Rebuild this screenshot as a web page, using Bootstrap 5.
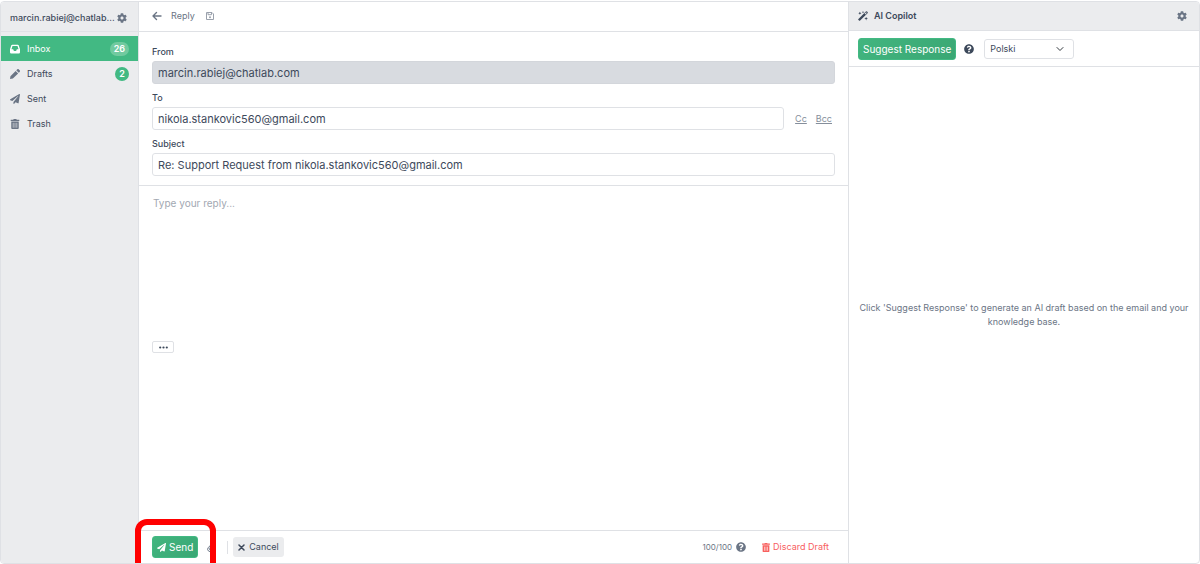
<!DOCTYPE html>
<html lang="en">
<head>
<meta charset="utf-8">
<meta name="viewport" content="width=device-width, initial-scale=1">
<title>Inbox – Reply</title>
<link href="https://cdn.jsdelivr.net/npm/bootstrap@5.3.0/dist/css/bootstrap.min.css" rel="stylesheet">
<style>
  :root { --ink:#3d495b; --muted-ink:#6b7585; --line:#dfe1e5; --panel:#ebecee; --brand:#42b983; }
  body { font-family:Inter,"Liberation Sans",sans-serif; font-size:9px; line-height:14px; color:var(--ink); background:#fff; }
  svg { fill:currentColor; flex:none; display:block; }
  button, input, select, textarea { font-family:inherit; }
  .app-shell { border:1px solid var(--line); border-radius:4px; margin-top:1px; height:calc(100vh - 1px); overflow:hidden; }
  .icon-btn { border:0; background:none; padding:0; color:var(--muted-ink); }

  .side { width:138px; background:var(--panel); border-right:1px solid var(--line); }
  .side-head { height:30px; padding:2px 11px 0 9px; border-bottom:1px solid var(--line); font-weight:500; }
  .side .nav-link { height:25px; padding:0 9px; color:var(--ink); border-radius:0; font-size:9px; }
  .side .nav-link.active { background:var(--brand); color:#fff; }
  .side .nav-link svg { width:10px; height:10px; margin-right:7px; color:var(--muted-ink); }
  .side .nav-link.active svg { color:#fff; }
  .count { background:var(--brand); color:#fff; border-radius:7px; height:14px; min-width:14px; padding:0 4px; font-size:9px; font-weight:600; text-align:center; }
  .active .count { background:#71ca9f; }

  .bar { height:30px; padding:0 13px 1px; border-bottom:1px solid var(--line); }
  .reply-title { margin:0 11px 0 9px; color:var(--muted-ink); }
  .save { color:#9aa1ac; }
  .fields { gap:8px; padding:14px 13px 9px; border-bottom:1px solid var(--line); }
  .fields label { font-size:9px; font-weight:500; line-height:12px; margin-bottom:3px; display:block; }
  .fields .form-control { height:23px; min-height:0; padding:0 5px; font-size:11px; line-height:16px; border-color:var(--line); border-radius:3px; color:var(--ink); }
  .fields .form-control:disabled { background:#d8dbe0; border-color:#d3d6db; }
  .copy-link { font-size:9px; color:#858e9b; }
  .cc { margin-left:11px; }
  .bcc { margin:0 3px 0 9px; }
  .compose { padding:10px 13px; }
  .reply-box { border:0; resize:none; padding:0 1px; height:145px; font-size:10px; line-height:14px; color:var(--ink); }
  .reply-box::placeholder { color:#a2a8b2; opacity:1; }
  .more { width:22px; height:12px; border:1px solid var(--line); border-radius:2px; background:#fff; padding:0; color:var(--ink); }

  .foot { height:33px; border-top:1px solid var(--line); padding:0 19px 0 13px; }
  .btn-brand { background:linear-gradient(135deg,#42b57f,#3aa774); border:1px solid var(--brand); color:#fff; border-radius:3px; font-size:10px; line-height:14px; padding:3px 4px; white-space:nowrap; }
  .btn-brand:hover { background:#379c6d; color:#fff; }
  .btn-cancel { background:var(--panel); border:0; color:var(--ink); border-radius:3px; font-size:9px; line-height:14px; padding:3px 5px; }
  .callout { position:absolute; inset:-17px -18px -20px -17px; border:6px solid #f00; border-radius:12px; pointer-events:none; z-index:2; }
  .send-icon, .bin { margin-right:3px; }
  .x-icon { margin-right:4px; }
  .clip { margin:0 11px 0 9px; }
  .divider { width:1px; height:13px; margin-right:5px; background:var(--line); }
  .quota { color:var(--muted-ink); font-size:8px; }
  .danger-link { color:#f8615f; border:0; background:none; padding:0; }

  .copilot { width:351px; border-left:1px solid var(--line); }
  .copilot-head { height:29px; background:var(--panel); border-bottom:1px solid var(--line); padding:0 12px 0 9px; font-weight:600; }
  .cp-title { margin-left:6px; }
  .tools { height:36px; border-bottom:1px solid var(--line); padding:0 9px; }
  .tool-help { margin:0 10px 0 8px; }
  .lang { width:90px; height:20px; border:1px solid var(--line); border-radius:3px; padding:0 5px; font-size:9px; line-height:14px; color:var(--ink); background-size:8px 8px; background-position:right 9px center; }
  .hint { color:var(--muted-ink); padding:0 8px; }
</style>
</head>
<body>
<svg class="d-none" aria-hidden="true">
  <symbol id="cog" viewBox="0 0 512 512"><path d="M487.4 315.7l-42.6-24.6c4.3-23.2 4.3-47 0-70.2l42.6-24.6c4.9-2.8 7.1-8.6 5.5-14-11.1-35.6-30-67.8-54.7-94.6-3.8-4.1-10-5.1-14.8-2.3L380.8 110c-17.9-15.4-38.5-27.3-60.8-35.1V25.8c0-5.6-3.9-10.5-9.4-11.7-36.7-8.2-74.3-7.8-109.2 0-5.5 1.2-9.4 6.1-9.4 11.7V75c-22.2 7.9-42.8 19.8-60.8 35.1L88.7 85.500c-4.9-2.8-11-1.9-14.8 2.3-24.7 26.7-43.6 58.9-54.7 94.6-1.7 5.4.6 11.2 5.500 14L67.3 221c-4.3 23.2-4.3 47 0 70.2l-42.6 24.6c-4.9 2.8-7.1 8.6-5.500 14 11.1 35.6 30 67.8 54.7 94.6 3.8 4.1 10 5.1 14.8 2.3l42.6-24.6c17.9 15.4 38.5 27.3 60.8 35.1v49.2c0 5.6 3.9 10.5 9.4 11.7 36.7 8.2 74.3 7.8 109.2 0 5.500-1.2 9.4-6.1 9.4-11.7v-49.2c22.2-7.9 42.8-19.8 60.8-35.1l42.6 24.6c4.9 2.8 11 1.9 14.8-2.3 24.7-26.7 43.6-58.9 54.7-94.6 1.5-5.500-.7-11.3-5.600-14.1zM256 336c-44.1 0-80-35.9-80-80s35.9-80 80-80 80 35.9 80 80-35.9 80-80 80z"/></symbol>
  <symbol id="plane" viewBox="0 0 512 512"><path d="M476 3.2L12.5 270.6c-18.1 10.4-15.8 35.6 2.2 43.2L121 358.4l287.3-253.2c5.5-4.9 13.3 2.6 8.6 8.3L176 407v80.5c0 23.6 28.5 32.9 42.5 15.8L282 426l124.6 52.2c14.2 6 30.4-2.9 33-18.2l72-432C515 7.8 493.3-6.8 476 3.2z"/></symbol>
  <symbol id="trash" viewBox="0 0 448 512"><path d="M32 464a48 48 0 0 0 48 48h288a48 48 0 0 0 48-48V128H32zm272-256a16 16 0 0 1 32 0v224a16 16 0 0 1-32 0zm-96 0a16 16 0 0 1 32 0v224a16 16 0 0 1-32 0zm-96 0a16 16 0 0 1 32 0v224a16 16 0 0 1-32 0zM432 32H312l-9.4-18.7A24 24 0 0 0 281.1 0H166.8a23.72 23.72 0 0 0-21.4 13.3L136 32H16A16 16 0 0 0 0 48v32a16 16 0 0 0 16 16h416a16 16 0 0 0 16-16V48a16 16 0 0 0-16-16z"/></symbol>
  <symbol id="help" viewBox="0 0 512 512"><path d="M504 256c0 136.997-111.043 248-248 248S8 392.997 8 256C8 119.083 119.043 8 256 8s248 111.083 248 248zM262.655 90c-54.497 0-89.255 22.957-116.549 63.758-3.536 5.286-2.353 12.415 2.715 16.258l34.699 26.31c5.205 3.947 12.621 3.008 16.665-2.122 17.864-22.658 30.113-35.797 57.303-35.797 20.429 0 45.698 13.148 45.698 32.958 0 14.976-12.363 22.667-32.534 33.976C247.128 238.528 216 254.941 216 296v4c0 6.627 5.373 12 12 12h56c6.627 0 12-5.373 12-12v-1.333c0-28.462 83.186-29.647 83.186-106.667 0-58.002-60.165-102-116.531-102zM256 338c-25.365 0-46 20.635-46 46 0 25.364 20.635 46 46 46s46-20.636 46-46c0-25.365-20.635-46-46-46z"/></symbol>
</svg>

<div class="app-shell d-flex">
  <aside class="side d-flex flex-column flex-shrink-0">
    <div class="side-head d-flex align-items-center">
      <span class="text-nowrap flex-grow-1">marcin.rabiej@chatlab...</span>
      <button class="icon-btn" type="button" aria-label="Account settings"><svg width="10" height="10"><use href="#cog"/></svg></button>
    </div>
    <nav class="nav flex-column pt-1" aria-label="Folders">
      <a class="nav-link active d-flex align-items-center" href="#"><svg viewBox="0 0 16 16"><path fill-rule="evenodd" d="M3.5 1h9a1.5 1.5 0 0 1 1.400 1L16 8.500V13a2 2 0 0 1-2 2H2a2 2 0 0 1-2-2V8.500L2.100 2A1.500 1.500 0 0 1 3.500 1zM4 3 2.300 8.500H5l1.300 2.500h3.400L11 8.500h2.700L12 3z"/></svg><span class="flex-grow-1">Inbox</span><span class="count">26</span></a>
      <a class="nav-link d-flex align-items-center" href="#"><svg viewBox="0 0 16 16"><path d="M9 3 13 7 4.600 15.300 0 16l.7-4.600zM10 2l1.400-1.400a2 2 0 0 1 2.800 0l1.200 1.200a2 2 0 0 1 0 2.800L14 6z"/></svg><span class="flex-grow-1">Drafts</span><span class="count">2</span></a>
      <a class="nav-link d-flex align-items-center" href="#"><svg><use href="#plane"/></svg><span>Sent</span></a>
      <a class="nav-link d-flex align-items-center" href="#"><svg><use href="#trash"/></svg><span>Trash</span></a>
    </nav>
  </aside>

  <main class="d-flex flex-column flex-grow-1">
    <header class="bar d-flex align-items-center">
      <button class="icon-btn" type="button" aria-label="Back"><svg width="10" height="10" viewBox="0 0 10 10"><path d="M4.500 1.500 1 5l3.500 3.500M1 5h8" fill="none" stroke="currentColor" stroke-width="1.400" stroke-linecap="round" stroke-linejoin="round"/></svg></button>
      <span class="reply-title">Reply</span>
      <button class="icon-btn save" type="button" aria-label="Save draft"><svg width="8" height="8" viewBox="0 0 8 8"><path d="M.5.5h5.500l1.500 1.500v5.500h-7zM2 .5v2.200h3.500V.5" fill="none" stroke="currentColor"/><circle cx="4" cy="5.200" r="1"/></svg></button>
    </header>

    <form class="d-flex flex-column flex-grow-1" onsubmit="return false">
      <div class="fields d-flex flex-column">
        <div><label for="from">From</label><input id="from" class="form-control" value="marcin.rabiej@chatlab.com" disabled></div>
        <div><label for="to">To</label>
          <div class="d-flex align-items-center"><input id="to" class="form-control" value="nikola.stankovic560@gmail.com"><a class="copy-link cc" href="#">Cc</a><a class="copy-link bcc" href="#">Bcc</a></div>
        </div>
        <div><label for="subject">Subject</label><input id="subject" class="form-control" value="Re: Support Request from nikola.stankovic560@gmail.com"></div>
      </div>
      <div class="compose flex-grow-1">
        <textarea class="reply-box d-block w-100" placeholder="Type your reply..." aria-label="Reply"></textarea>
        <button class="more d-flex align-items-center justify-content-center" type="button" aria-label="Show quoted text"><svg width="9" height="3" viewBox="0 0 9 3"><circle cx="1.200" cy="1.500" r="1.100"/><circle cx="4.500" cy="1.500" r="1.100"/><circle cx="7.800" cy="1.500" r="1.100"/></svg></button>
      </div>
      <footer class="foot d-flex align-items-center">
        <div class="position-relative">
          <button class="btn btn-brand d-flex align-items-center" type="submit"><svg class="send-icon" width="9" height="9"><use href="#plane"/></svg>Send</button>
          <span class="callout"></span>
        </div>
        <button class="icon-btn clip" type="button" aria-label="Attach file"><svg width="9" height="9" viewBox="0 0 9 9"><path d="M4.500 3 2.500 5.300a.8.8 0 0 0 1.200 1.200l3-3.200A1.500 1.500 0 0 0 4.500 1.200L1.300 4.600a2.300 2.300 0 0 0 3.400 3.200L7 5.500" fill="none" stroke="currentColor"/></svg></button>
        <span class="divider"></span>
        <button class="btn btn-cancel d-flex align-items-center" type="button"><svg class="x-icon" width="7" height="7" viewBox="0 0 7 7"><path d="m1 1 5 5m0-5-5 5" stroke="currentColor" stroke-width="1.500" stroke-linecap="round"/></svg>Cancel</button>
        <span class="ms-auto quota">100/100</span>
        <svg class="quota ms-1" width="10" height="10"><use href="#help"/></svg>
        <button class="danger-link d-flex align-items-center ms-3" type="button"><svg class="bin" width="8" height="9"><use href="#trash"/></svg>Discard Draft</button>
      </footer>
    </form>
  </main>

  <aside class="copilot d-flex flex-column flex-shrink-0">
    <header class="copilot-head d-flex align-items-center">
      <svg width="10" height="10" viewBox="0 0 16 16"><path fill-rule="evenodd" d="M12.600.7a1.200 1.200 0 0 1 1.700 0l1 1a1.200 1.200 0 0 1 0 1.700L3.400 15.300a1.200 1.200 0 0 1-1.700 0l-1-1a1.200 1.200 0 0 1 0-1.700zM10.500 4.500l1 1 2.500-2.500-1-1zM3 1l.8 1.700L5.500 3.500l-1.700.8L3 6l-.8-1.700L.5 3.500l1.700-.8zM8 0l.5 1.300L9.800 1.800l-1.300.5L8 3.600l-.5-1.300-1.300-.5 1.300-.5zM13 9l.8 2.200L16 12l-2.200.8L13 15l-.8-2.200L10 12l2.200-.8z"/></svg>
      <span class="cp-title flex-grow-1">AI Copilot</span>
      <button class="icon-btn" type="button" aria-label="Copilot settings"><svg width="10" height="10"><use href="#cog"/></svg></button>
    </header>
    <div class="tools d-flex align-items-center">
      <button class="btn btn-brand" type="button">Suggest Response</button>
      <svg class="tool-help" width="10" height="10"><use href="#help"/></svg>
      <select class="form-select lang" aria-label="Response language"><option>Polski</option><option>English</option></select>
    </div>
    <div class="hint flex-grow-1 d-flex align-items-center text-center">Click 'Suggest Response' to generate an AI draft based on the email and your knowledge base.</div>
  </aside>
</div>
<script src="https://cdn.jsdelivr.net/npm/bootstrap@5.3.0/dist/js/bootstrap.bundle.min.js"></script>
</body>
</html>
